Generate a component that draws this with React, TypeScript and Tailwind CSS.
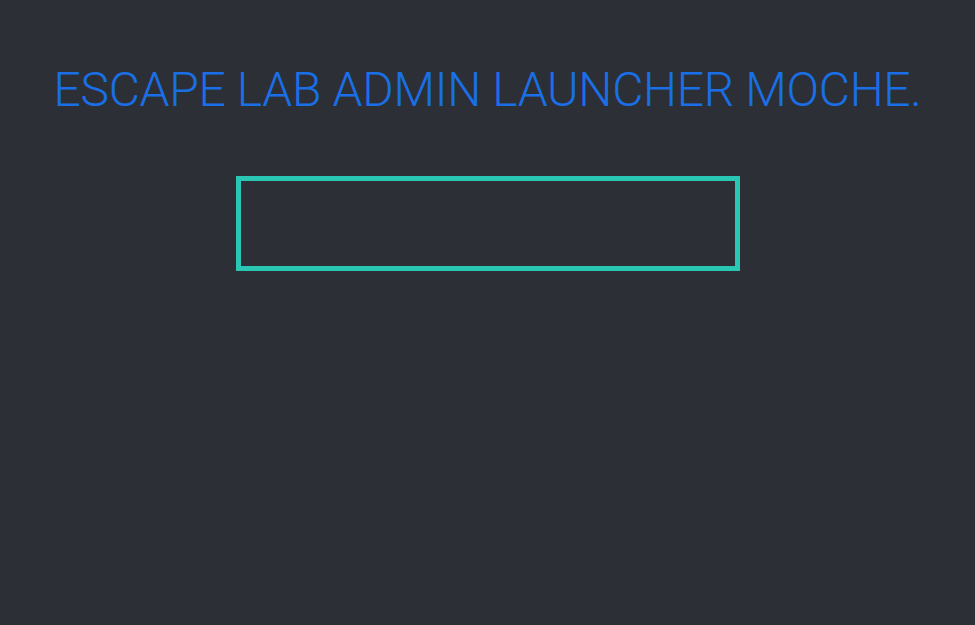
import React from "react";

const App: React.FC = () => {
  return (
    <div className="min-h-screen w-full bg-[#2c2f35] flex flex-col items-center font-['Roboto','Liberation_Sans',sans-serif]">
      {/* Title */}
      <h1 className="mt-[66px] text-[48px] leading-none font-light text-[#1a6fe6] whitespace-nowrap tracking-[-0.3px]">
        ESCAPE LAB ADMIN LAUNCHER MOCHE.
      </h1>
      {/* Launcher frame */}
      <div className="mt-[62px] ml-[1px] w-[504px] h-[95px] border-[5px] border-[#28c6b3]" />
    </div>
  );
};

export default App;
